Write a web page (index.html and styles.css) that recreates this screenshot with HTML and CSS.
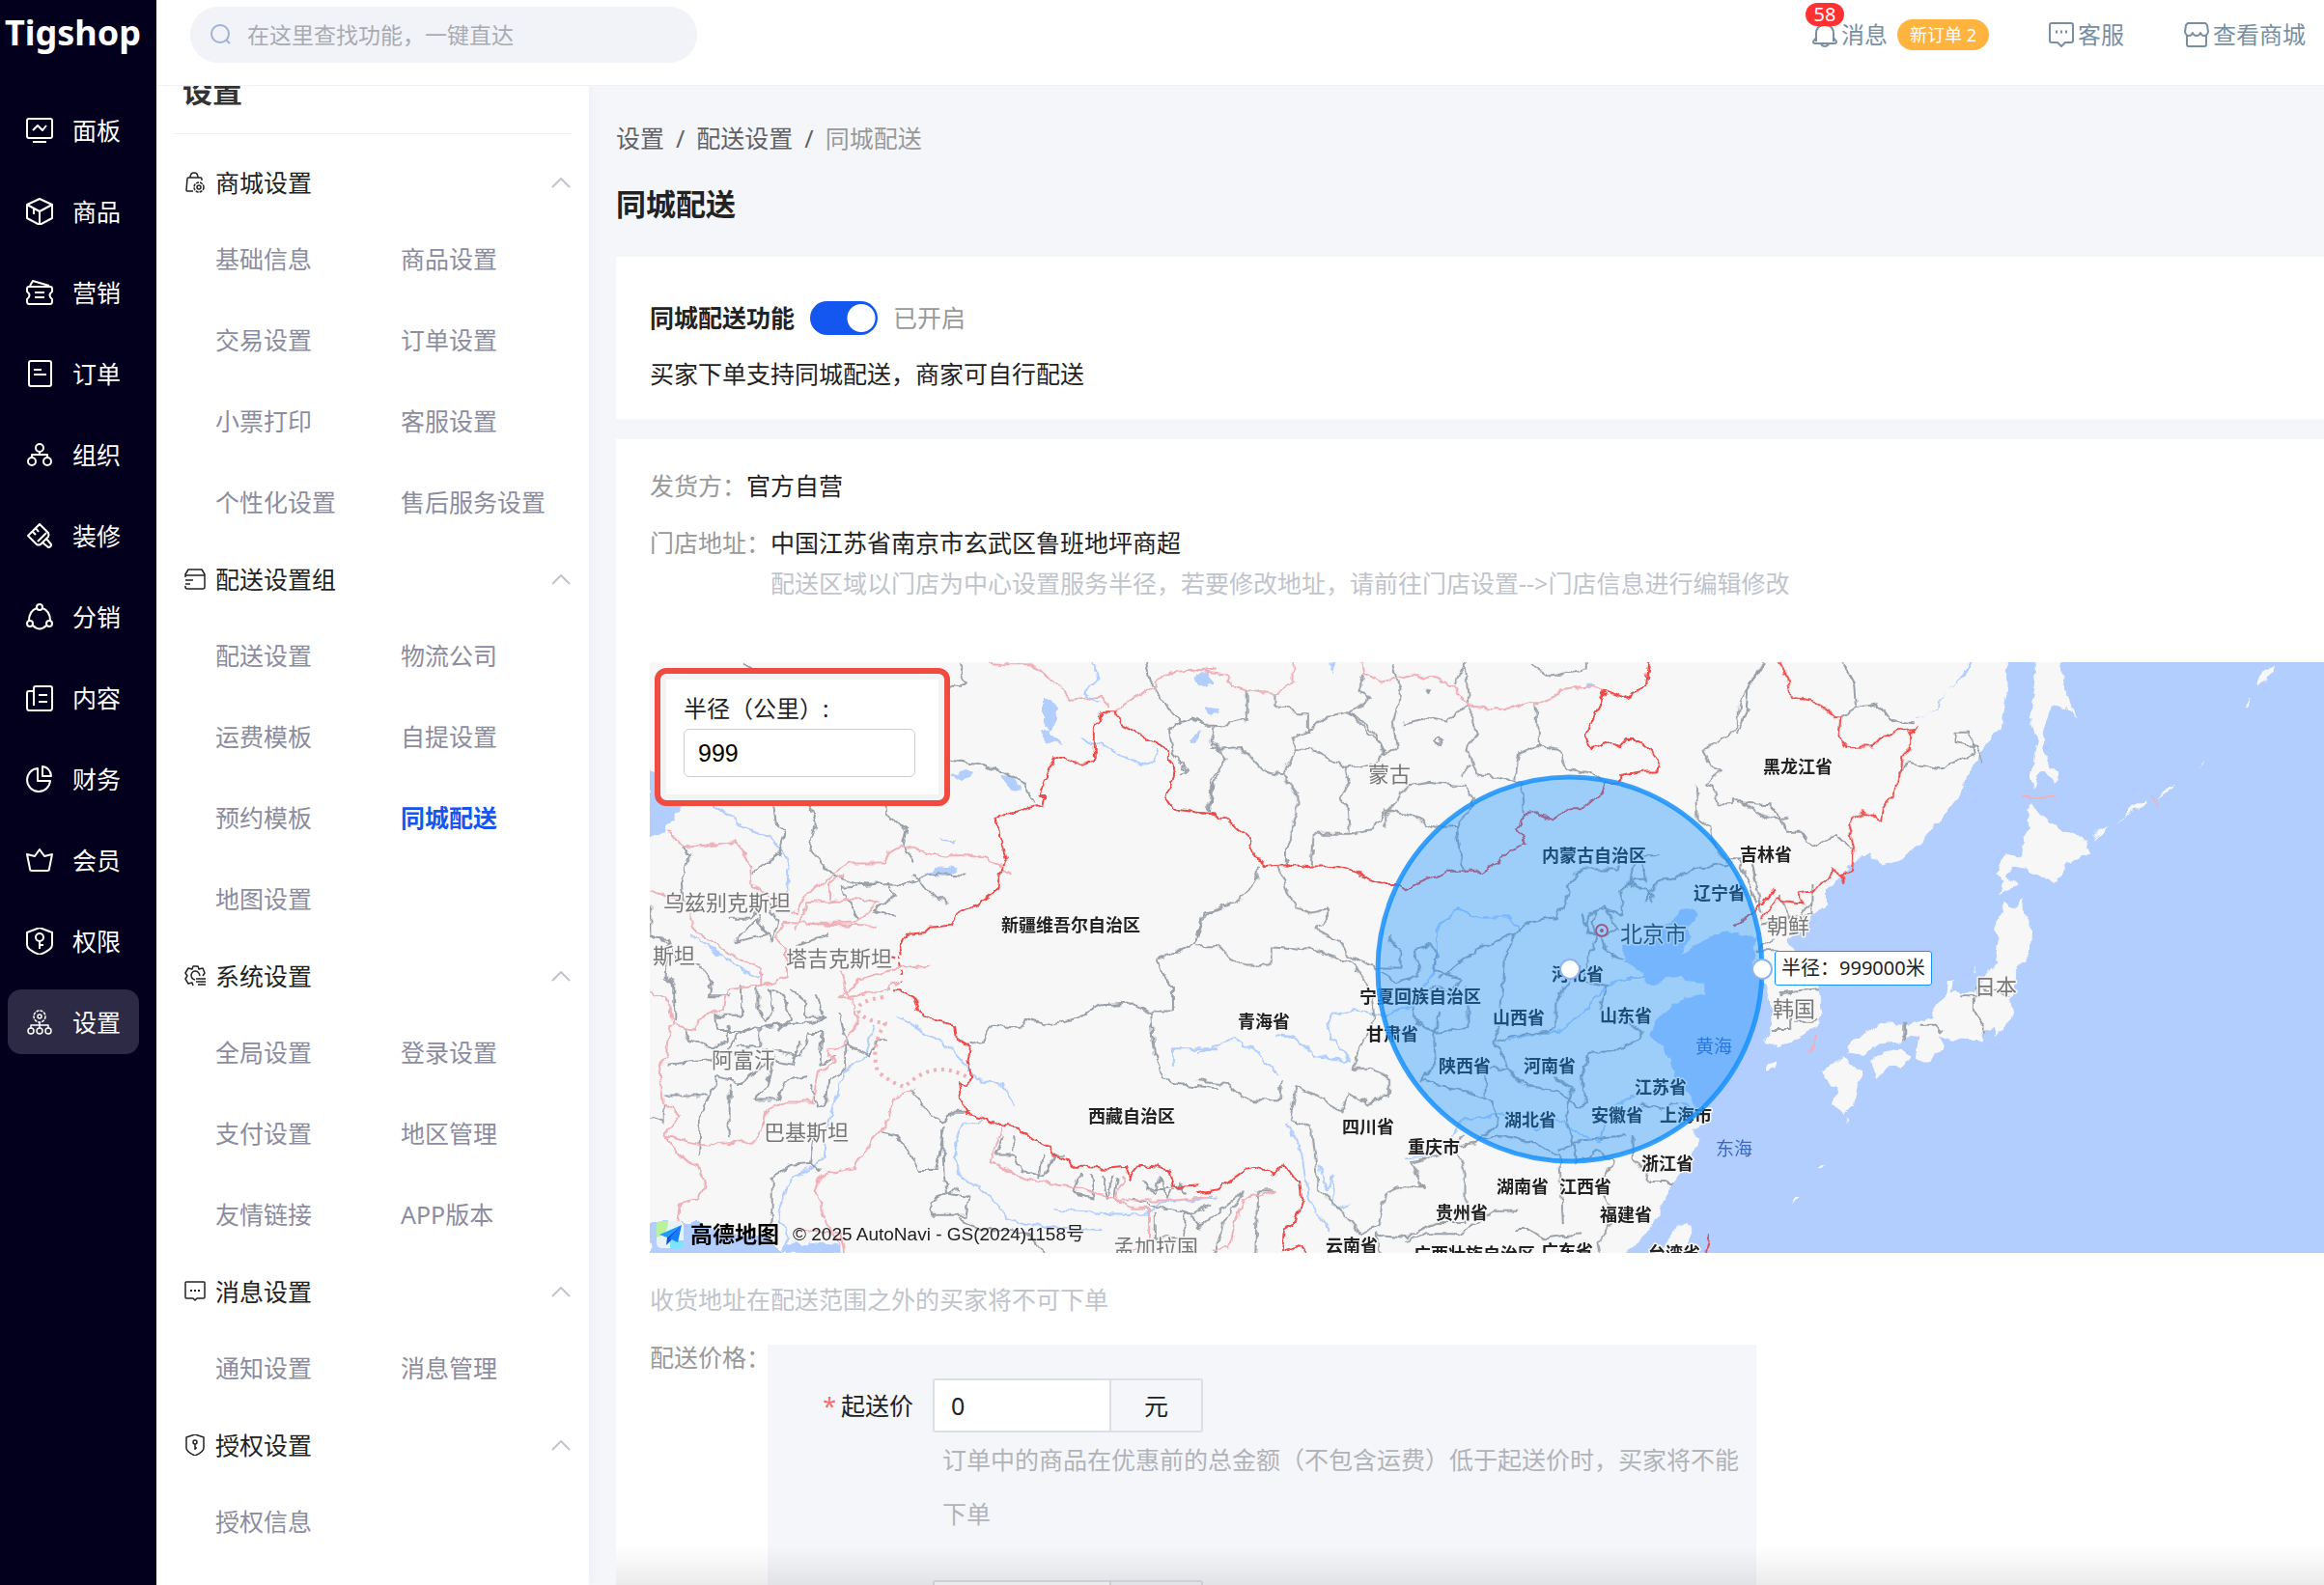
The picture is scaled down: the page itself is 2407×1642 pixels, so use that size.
FILE: index.html
```html
<!DOCTYPE html>
<html lang="zh-CN">
<head>
    <meta charset="UTF-8">
    <meta name="viewport" content="width=device-width, initial-scale=1.0">
    <title>同城配送 - Tigshop</title>
    <link rel="stylesheet" href="styles.css">
</head>
<body>
    <nav class="sidebar">
        <a href="#" class="logo">Tigshop</a>
        <a href="#" class="nav-item">
            <svg class="nav-icon" viewBox="0 0 28 28"><rect x="1" y="2" width="26" height="20" rx="2"/><path d="M7 14l5-5 5 5 4-5M7 26h14"/></svg>
            <span>面板</span>
        </a>
        <a href="#" class="nav-item">
            <svg class="nav-icon" viewBox="0 0 28 28"><path d="M14 1l13 6v14l-13 7-13-7V7zM1 7l13 7 13-7M14 14v14M8 11v6"/></svg>
            <span>商品</span>
        </a>
        <a href="#" class="nav-item">
            <svg class="nav-icon" viewBox="0 0 28 28"><path d="M3 8h22q2 0 2 2v3q-5 4 0 8v2q0 3-2 3H3q-2 0-2-3v-2q5-4 0-8v-3q0-2 2-2zM4 7l3-5 17 5M9 14h10M9 19h10"/></svg>
            <span>营销</span>
        </a>
        <a href="#" class="nav-item">
            <svg class="nav-icon" viewBox="0 0 28 28"><rect x="3" y="1" width="23" height="26" rx="2"/><path d="M8 10h8M8 15h13"/></svg>
            <span>订单</span>
        </a>
        <a href="#" class="nav-item">
            <svg class="nav-icon" viewBox="0 0 28 28"><circle cx="14" cy="7" r="4"/><circle cx="6" cy="21" r="4"/><circle cx="22" cy="21" r="4"/><path d="M14 11v3M6 17v-3h16v3"/></svg>
            <span>组织</span>
        </a>
        <a href="#" class="nav-item">
            <svg class="nav-icon" viewBox="0 0 28 28"><path d="M14 2L2 14l9 9q2 1 4 0l8-8q1-2 0-4zM10 6l3 4M6 9l4 4M12 20l9-9M17 21l6 5q3 0 3-3l-5-6"/></svg>
            <span>装修</span>
        </a>
        <a href="#" class="nav-item">
            <svg class="nav-icon" viewBox="0 0 28 28"><circle cx="14" cy="4" r="3"/><circle cx="4" cy="21" r="3"/><circle cx="24" cy="21" r="3"/><path d="M11 5Q3 8 3 18M17 5q8 3 8 13M7 23q7 7 14 0"/></svg>
            <span>分销</span>
        </a>
        <a href="#" class="nav-item">
            <svg class="nav-icon" viewBox="0 0 28 28"><path d="M8 22V4q0-2 2-2h15q2 0 2 2v20q0 3-2 3H3q-2 0-2-3V9q0-2 2-2h5M13 11h9M13 18h9"/></svg>
            <span>内容</span>
        </a>
        <a href="#" class="nav-item">
            <svg class="nav-icon" viewBox="0 0 28 28"><path d="M12 3a12 12 0 1 0 13 13H12zM17 1v10h9q-1-9-9-10z"/></svg>
            <span>财务</span>
        </a>
        <a href="#" class="nav-item">
            <svg class="nav-icon" viewBox="0 0 28 28"><path d="M1 8l8 2 5-7 5 7 8-2-3 15q0 2-2 2H6q-2 0-2-2z"/></svg>
            <span>会员</span>
        </a>
        <a href="#" class="nav-item">
            <svg class="nav-icon" viewBox="0 0 28 28"><path d="M14 0l13 5v13q0 5-13 10Q1 23 1 18V5z"/><circle cx="14" cy="10" r="4"/><path d="M14 14v8M14 18h4"/></svg>
            <span>权限</span>
        </a>
        <a href="#" class="nav-item active">
            <svg class="nav-icon thin" viewBox="0 0 28 28"><circle cx="14" cy="8" r="6" stroke-dasharray="3 1"/><circle cx="14" cy="8" r="2"/><circle cx="5" cy="23" r="3"/><circle cx="14" cy="23" r="3"/><circle cx="23" cy="23" r="3"/><path d="M14 14v6M5 20v-3h18v3"/></svg>
            <span>设置</span>
        </a>
    </nav>

    <div class="page">
        <header class="topbar">
            <label class="search">
                <svg class="search-icon" viewBox="0 0 22 22"><circle cx="10" cy="10" r="9"/><path d="M16 16l4 4"/></svg>
                <input type="text" placeholder="在这里查找功能，一键直达" aria-label="搜索">
            </label>
            <div class="actions">
                <a href="#" class="action">
                    <svg class="action-icon" viewBox="0 0 26 26"><path d="M4 20v-8q0-9 9-9t9 9v8M4 16l-3 4q0 2 2 2h20q2 0 2-2l-3-4M9 23q4 4 8 0"/></svg>
                    <span>消息</span>
                    <span class="badge">58</span>
                    <span class="pill">新订单 2</span>
                </a>
                <a href="#" class="action">
                    <svg class="action-icon" viewBox="0 0 26 26"><path d="M3 1h20q2 0 2 2v16q0 2-2 2h-6l-4 4-4-4H3q-2 0-2-2V3q0-2 2-2z"/><path d="M7 10h2M12 10h2M17 10h2" stroke-width="3"/></svg>
                    <span>客服</span>
                </a>
                <a href="#" class="action">
                    <svg class="action-icon" viewBox="0 0 26 26"><path d="M4 1h18l2 2 1 7q-1 4-4 4-3 0-4-3-1 3-4 3t-4-3q-1 3-4 3-3 0-4-4l1-7zM3 14v9q0 2 2 2h16q2 0 2-2v-9"/></svg>
                    <span>查看商城</span>
                </a>
            </div>
        </header>

        <div class="body">
            <aside class="submenu">
                <h2 class="submenu-title">设置</h2>
                <section class="group">
                    <button type="button" class="group-head">
                        <svg class="group-icon" viewBox="0 0 22 22"><path d="M9 20H3q-1 0-1-1L3 7q0-1 1-1h13q1 0 1 3M6 6q0-5 4-5t4 5"/><circle cx="15" cy="16" r="5" stroke-dasharray="3 1"/><circle cx="15" cy="16" r="2"/></svg>
                        <span>商城设置</span>
                        <svg class="chevron" viewBox="0 0 22 12"><path d="M2 11l9-9 9 9"/></svg>
                    </button>
                    <div class="links">
                        <a href="#">基础信息</a><a href="#">商品设置</a>
                        <a href="#">交易设置</a><a href="#">订单设置</a>
                        <a href="#">小票打印</a><a href="#">客服设置</a>
                        <a href="#">个性化设置</a><a href="#">售后服务设置</a>
                    </div>
                </section>
                <section class="group">
                    <button type="button" class="group-head">
                        <svg class="group-icon" viewBox="0 0 22 22"><path d="M1 9V6l3-5h14l3 5v13q0 2-2 2H3q-2 0-2-2v-1M1 7h20M1 12h8M1 16h5"/></svg>
                        <span>配送设置组</span>
                        <svg class="chevron" viewBox="0 0 22 12"><path d="M2 11l9-9 9 9"/></svg>
                    </button>
                    <div class="links">
                        <a href="#">配送设置</a><a href="#">物流公司</a>
                        <a href="#">运费模板</a><a href="#">自提设置</a>
                        <a href="#">预约模板</a><a href="#" class="current">同城配送</a>
                        <a href="#">地图设置</a>
                    </div>
                </section>
                <section class="group">
                    <button type="button" class="group-head">
                        <svg class="group-icon" viewBox="0 0 22 22"><path d="M9 21l-1-3-4 1-3-5 2-3-2-3 3-5 4 1 1-3h5l1 3 4-1 2 5-2 3M11 15q-4-1-4-5 1-4 4-4 4 0 5 5M12 14h10M12 17h10M14 20h8"/></svg>
                        <span>系统设置</span>
                        <svg class="chevron" viewBox="0 0 22 12"><path d="M2 11l9-9 9 9"/></svg>
                    </button>
                    <div class="links">
                        <a href="#">全局设置</a><a href="#">登录设置</a>
                        <a href="#">支付设置</a><a href="#">地区管理</a>
                        <a href="#">友情链接</a><a href="#">APP版本</a>
                    </div>
                </section>
                <section class="group">
                    <button type="button" class="group-head">
                        <svg class="group-icon" viewBox="0 0 22 22"><path d="M2 1h18q1 0 1 1v15q0 1-1 1h-7l-2 2-2-2H2q-1 0-1-1V2q0-1 1-1z"/><path d="M6 10h2M10 10h2M14 10h2" stroke-width="2"/></svg>
                        <span>消息设置</span>
                        <svg class="chevron" viewBox="0 0 22 12"><path d="M2 11l9-9 9 9"/></svg>
                    </button>
                    <div class="links">
                        <a href="#">通知设置</a><a href="#">消息管理</a>
                    </div>
                </section>
                <section class="group">
                    <button type="button" class="group-head">
                        <svg class="group-icon" viewBox="0 0 22 22"><path d="M11 0l9 3v11q0 4-9 8-9-4-9-8V3z"/><circle cx="11" cy="8" r="2"/><path d="M11 10v6M11 14h2"/></svg>
                        <span>授权设置</span>
                        <svg class="chevron" viewBox="0 0 22 12"><path d="M2 11l9-9 9 9"/></svg>
                    </button>
                    <div class="links">
                        <a href="#">授权信息</a>
                    </div>
                </section>
            </aside>

            <main class="content">
                <div class="breadcrumb">
                    <a href="#">设置</a><span>/</span><a href="#">配送设置</a><span>/</span><span class="last">同城配送</span>
                </div>
                <h1>同城配送</h1>

                <section class="card feature">
                    <div class="switch-row">
                        <label for="enabled">同城配送功能</label>
                        <input type="checkbox" id="enabled" class="switch" checked>
                        <span class="muted">已开启</span>
                    </div>
                    <p>买家下单支持同城配送，商家可自行配送</p>
                </section>

                <section class="card detail">
                    <div class="row"><span class="muted">发货方：</span><span>官方自营</span></div>
                    <div class="row">
                        <span class="muted">门店地址：</span>
                        <div>
                            <p>中国江苏省南京市玄武区鲁班地坪商超</p>
                            <p class="hint">配送区域以门店为中心设置服务半径，若要修改地址，请前往门店设置--&gt;门店信息进行编辑修改</p>
                        </div>
                    </div>

                    <div class="map">
                        <svg class="map-canvas">
                            <defs>
                                <filter id="rough" x="0" y="0" width="100%" height="100%">
                                    <feTurbulence type="fractalNoise" baseFrequency="0.09" numOctaves="2" seed="4"/>
                                    <feDisplacementMap in="SourceGraphic" scale="9" xChannelSelector="R" yChannelSelector="G"/>
                                </filter>
                            </defs>
                            <g filter="url(#rough)">
                                <!-- land -->
                                <g class="land">
                                    <rect x="-20" y="-20" width="600" height="660"/>
                                    <path transform="translate(567 -16) scale(.3827 .4082)" d="M-20 0H1520V738L1480 725 1440 725 1390 733 1340 765 1310 782 1325 755 1340 735 1325 715 1355 685 1340 665 1300 670 1280 700 1240 725 1215 745 1150 760 1155 800 1210 830 1215 855 1240 860 1270 840 1310 835 1320 850 1375 855 1375 880 1320 890 1290 910 1255 935 1225 975 1225 990 1260 1015 1280 1050 1300 1100 1330 1140 1350 1165 1300 1160 1370 1210 1335 1225 1360 1245 1340 1290 1310 1330 1280 1370 1250 1440 1210 1500 1130 1560H-20z"/>
                                    <path transform="translate(1127 -16) scale(.3871 .4082)" d="M-60 0H725L720 40 722 100 705 205 670 240 630 300 600 370 540 440 490 500 430 545 385 555 350 525 330 530 275 580 235 620 235 655 205 680 160 720 130 745 150 770 180 800 215 860 225 930 215 960 160 995 110 1020 70 1000 90 960 85 900 75 860 40 800 50 780 35 760 60 740 0 725-60 700z"/>
                                    <path transform="translate(1127 -16) scale(.3871 .4082)" d="M790 0L858 20 868 80 890 150 910 185 880 155 845 148 825 185 812 260 835 300 858 320 852 350 825 315 805 325 790 362 782 330 800 240 782 180 795 100zM785 395L830 445 890 475 925 480 945 525 880 545 845 600 770 565 735 560 715 580 748 605 700 628 712 595 690 570 715 530 760 530 765 490 780 460 770 410zM712 650L735 665 760 635 762 670 788 720 785 770 765 800 745 815 742 870 730 900 735 940 690 985 690 965 655 975 650 1000 570 998 540 985 555 1010 505 1058 475 1045 485 985 440 1000 380 1005 330 1035 290 1030 300 1010 380 955 440 960 520 940 520 915 555 890 560 850 575 850 570 880 640 870 690 800 700 740 690 720zM440 1020L458 1040 435 1068 410 1060 375 1095 355 1050 395 1030zM285 1040L335 1080 320 1120 310 1160 285 1183 255 1165 265 1120 245 1115 225 1075zM75 1065l30-8-5 15-25 2zM1125 385l30-30 15-5-25 25zM1010 455l40-45 50-20-5 12-45 15zM945 495l25-35 20-3-25 20zM1388 90l20-35 30-10-20 40-30 15zM1360 150l8-20 2 5-4 18zM1230 312l18-20 2 2zM290 1215l4-20 3 5zM145 1420l8-22 14-8zM212 1325l18-15-5 12zM625 825l8-14-2 18z"/>
                                    <path d="M1050 612q8-28 24-30 10 2 4 14l-12 20z"/>
                                </g>
                                <!-- lakes, gulf -->
                                <g class="water">
                                    <path transform="translate(-13 -16) scale(.3827 .4082)" d="M34 315l50 20 70 30-50 60-30 45-40 20zM775 575l50-20 40 5-30 25zM815 490l50 0-10 6zM845 325l40-14 25 10-30 20zM980 325l40 5 20 40-25-5zM1505 75l40-10 15 25-40 10zM1090 220l20-5 45 35-50-10zM1100 190v-60h20l20 30-25 60zM1495 230l30-15-5 20-25 10zM34 1460h130l70 30 110 0 60 60H34zM400 1520l60-10 90 10v20H400z"/>
                                    <path transform="translate(567 -16) scale(.3827 .4082)" d="M0 70l40 10-20 20H0zM20 155l40 5-20 20zM355 40h20l-10 30zM1050 95l30 0-20 15z"/>
                                    <path d="M1313 60l20-12 10-18 18-15 10-15h-4l-12 18-12 12-8 18-24 12z"/>
                                </g>
                                <g class="river">
                                    <path transform="translate(-13 -16) scale(.3827 .4082)" d="M130 365l100 50 70 50 60 20 50 60-5 80M1230 40l20 40-40 40 40 20M1200 235l60 15 100 50 40-10 10-30M700 940l50 20 100 60 70 80 70 10 30 60M640 960l-20 80-60 40-40 120-20 100-90 60-30 80 30 60-30 60M940 1200l-70 20-10 40 10 80 80 50 50 60 60 20 200 10M1130 1430l250 10 40-30 150-10M1450 1060v-40h120M140 730l160 100 40 10"/>
                                    <path transform="translate(567 -16) scale(.3827 .4082)" d="M0 1030l100-35 60 30 60 60M210 985l50 5 60 50 90 10-60-80 20-40 60-8 80 15 70-30 60-80 10-50 0-60 50-50 70 20 80 0 30 40M840 1000l80-20 60 0 60-50 70-70 50-20 60 0M560 1300l100-10 60-90 100-15 100 40 50-30 60 40 60 20 20-80 70-35M240 1210l40 60 20 130 60 80M330 1310l20 70 20-40-5 80 50 0"/>
                                </g>
                                <!-- province and foreign region lines -->
                                <g class="line">
                                    <path transform="translate(-13 -16) scale(.3827 .4082)" d="M285 40l60 35 20 0M870 40l20 50-20 15-45 0-5 60 15 40-20 80 100 10 120 40 40 60M365 375l10 70 25 20-15 60-75 50M455 375l25 70-15 70 65 65 60 20 130 5 70-30 100 5M120 510l25 15-25 80 5 40M670 375l5 50 55 40-10 40 30 40M35 655v80l50 5 20 50 70 20 30 40-10 35 60 0M35 730l50 20-5 90 20 25v85M245 690l60 0 20-20 20 60-80 20 60-60 40 60 15-55-20-40M600 690l-50-80 130-10 20 30-60 40 60 15M750 580l30 40 65 30M430 760l90-30M280 860l0 75-70 0 5 40 80 0M325 860l0 60 25 30 20-20-10-60 35 10 20 60-35 30M415 870l40 30 0 40 50 0-20-60M125 965l20 35 60 20 40-20 0-40M330 965l-60 20-30 45-50 20-110 10M330 965l0 50-60 0M330 965l90-10 50 0 40-15M340 1020l100 20 20-60 40 0-5 80 40-20M440 1000l-20 60-60-10-80 60-60-20-50 100-5 100M370 1040l-20 70-30 40 60 0 20-50 60-10M75 1138l115 0M250 1250v-140M35 1195l40 10 0-40M470 1110l20 60 20-10 5-60 50-30 0-60M545 930l25 80 60 30 20-40 30 0M740 1120l50 60 40 30 20-30 50 0M830 1220l-20 110-50 0-20-40-40-50-40-10M825 1225l5 120 10 40 60 10-10 50-90 0-10-40 80-30M470 1310l10-70M495 1330l-20-20-60 5-50 30 0 80-10 50M990 1240l-20 50 50 0 20 40 60 10 30-50 30 0M1020 1240l0 40M1100 1290l-10 60M1200 1340l-20 50 60 10-10-60M1260 1340l10 60 20-60M1290 1400l10-50M1365 1350l30 40 20-40 20 50 30-40 20 30M1380 1380l100-10M1340 1400l60 20 100 20 20 40M1400 1440v60l80 0 0-60 70-20M870 1450l60 30 70 0 60 10 40 50M1380 40l10 50 20 30 60 70-30 20 10 60 40 50-20 5M1465 190l40-10 30 20 33 0M1550 420l5-60 20-40M900 1010l40-10 20-40 80 5 20-20 60 15 80-20 50-30 90-5 50 25 10 100 20 60 40 20 110 10M1390 925l60 0 0-60-30-40-10-30 100-40 20-80 33-5"/>
                                    <path transform="translate(567 -16) scale(.3827 .4082)" d="M135 110v75l-90 20-10 40 20 10 25 30-40 50-10 85M210 120l0 30 70 20 20 0 0 45-40 15 10 30 50 5 80 40 80-10 30-30-60-60-40-40-50 10-70 40M40 260l80-5 60 60 50 10 40-65M230 325l40 50 0 50-30 80 0 50M400 305l10 40-20 40 20 30 5 60 60-10 35-50 70 15 60 30 60-5 30-30 20-40-20-30-100-10-70 10-20 40-30 30 0 30M415 475l-100 0-5 85M450 75l-10 40 30 15-55 35 60 50 35 60 30-20-10-60 20-90-20-60M555 195l70-15 50 10 60-40-10-110-30 60M740 150l0 40 20 30-30 40 30 70 60 0 60 20 5 70M740 300l-30 30M860 340l10-70 50-20 60 10 20 50 60 10 40 20M915 140l10 110M700 455l18 120M905 45l50 30 100-20 0-20M620 107l5 8 6-6zM645 240l12-8 10 6-10 10zM1530 40l-60 100-10 70-50 30-40 20 20 40 30 15-40 30 20 5 10 50 40 0 0-20 100 60 50-10M1350 350l5 90 30 20 20 60 30 20 60 0 30 110M1500 540l30 140M220 555l20 60 30 50 40 10 40-10 0 30-30 20 60 30 30 40 80 30 60 0 0-50-30-20 0-10M170 560l-10 40-60 50-80 30-20 50M0 760l60 0 30 30 40 20 70 0 0-50 120 10 100 30 50 80 10 60-40 80-20 50 50 0 50 30 0 40-60 20-50-30-20 50-60-40-60-20-20 80 60 20 20 160 60 50 50 60 50-20 20-80 50-20 50 0-30-60 80-20 60-50M0 1100l80 10 50 40 90 0 10-50M500 830l40 20 60-20-10-60 40-20 20 30-10 40 70 20-20 40-50-20-60 30 10 60 50 30 20-50M650 840l40-20 80-60 60-20 30-10 40-30 50-10 25-5 30-60-10-20 50-40 90 0 20-40 30 20-10 60 40 10 20 30M860 730l-30 60-10 160-15 50 35 70 40 40 100 20 50 40 20-10-10-70 20-60 60 0 80-30 0-30-60-20-50-30 20-60-60-10 0-30 30-80-10-40 20-40 60 20-5-60 40-30 30 0-20-60 60 0M1040 680l20 50 30 0 20 50 40 10M1100 655l-40 30-10 40 50 10 40-20zM810 1000l90-20 70-10 0-70 60-90M1215 640l30-40 60-20 60-20 80-10M730 860l0 110-90 10 5 80-40 40 130 30 60 20 20 60-60 50-60 10 30 60 0 130-80 0-80 40-80-10 10 60 30 20 0 60 100 20 80-60 70-40 80 0 10 40 70 10 40 40 60-30 20 40 50-20 40-80-50 20-10-60 40-50-20-60-20-30 40-60-40-30-60 30-10-60-20-60 20-70-50-30M770 1250l60-10 80 20 70 30 10 180M980 1280l60-30 120-10M1180 1240l0 60 50 60 60 0M780 1140l0-70 60 0M560 1510l60-20 90 0 100-60 60 0M860 1480l40 0 40 20 100-10M1200 1160l40 10 60-10M160 1540l5-160 50 0M0 1480l60-50 70-50-60 80-20 80"/>
                                    <path transform="translate(1127 -16) scale(.3871 .4082)" d="M70 40l-40 60-5 60-25 60M280 40l30 50 5 60M275 180l40-25 60-10 30 40 65 10M430 320l30-30 80 20 60-25 30-10-10-60-40 0 0 30 60 10 15 40M0 395l80 5 40 40 10 30 40 0 30 40 60-30 45 35M0 540l30 60 20 50M200 600l0 80-60 10-30-60M60 700l100-20 40-30M100 740l-50 30 60 0M110 880l105-10M140 900l0 70-50 0M150 950l65 0M590 885l50 0 0-20 90 20M630 890l0 30 25 40 0 20M445 950l0 50M490 960l40 0 20 20"/>
                                </g>
                                <g class="abroad">
                                    <path transform="translate(-13 -16) scale(.3827 .4082)" d="M85 465l40 45 140-15 40 50 5 60 20 10 60 40 40 20 20-40 60-40 60-45 100 0 10-30 40-15 80 25 120 0 60 20 30 30M35 620l110 30 0 60 90 60 100 50 0 40 70-20 0-70-30-30 20-40 250 10M430 720l30-70 130-10 60 10-60 50-130 0M520 640l0-40 40-20M335 860l-90 10-10 50-60 20-20 30-60-10-10-60-50-25M90 960l-10 80-20 20 10 100 45 30-40 50 90 25 160-10 20-70 60-30 70 0 20-80 40-20-20-30 40-10 40-60-10-60-40 0 60-50 60-20 60-10 70-5M75 1240l50 60 40 20 20 50-20 30-50 20-10 60M550 820l20 70 100-20 40-20M750 1120l-60 30-10 50-50 60-40 60-90 20-20 40 30 80 40 60M940 40l50 5 80 0 80 60 20 30 80-10 30 30M1300 160l90-55 50-40 130-10M985 1225l-30 80 100 50 150 20 100 30 150 0 100-10M1315 1345l-20 60 40 20 50 0 0 90-60 25M430 1480l120 10 10 50"/>
                                    <path transform="translate(567 -16) scale(.3827 .4082)" d="M0 60l80 10 10 30 40 10 80 10 50-30 0-50M445 40l5 30 50 20 80-20 70 10 50 30 35 40 100 10 60-20 50 0 40-30 80-10 40 10M215 1380l-90 20-20 60-20 70M40 1530l50-5"/>
                                    <path transform="translate(1127 -16) scale(.3871 .4082)" d="M760 382h90M1107 378l16 26M212 988l-18 38"/>
                                </g>
                                <g class="border">
                                    <path transform="translate(-13 -16) scale(.3827 .4082)" d="M1568 425l-60-5-60-10-15-20 10-40 10-40-30-60-60-25-60-30-5-30-40 0-20 40 0 80-30 10-20 0-60-15-40 100 15 0-5 30-20-5-70 20-40 5 10 50 20 60-15 40-5 35-60 40-35 15-20 10-15 30-60 5-10 10-50 5-15 35 5 20M690 870l20 0 40 20 20 45 60 20 30 5 5 40 35 20-5 30 10 45-15 20-20-10 5 40 20 40 40 10 55 25 10-5 30 5 40 30 45 20 10 20 40 10 15 20 30 0 60 5 50-5 10 30 30-35 50 5 30 10 10 40 70-5"/>
                                    <path transform="translate(567 -16) scale(.3827 .4082)" d="M0 1387l60-10 70-50 30-5 45 20 30-30 30 40 15 0 5 50-20 60-30 20-5 50 50-15 15 20M0 422l35 2 40 10 40 32 20 10 20 50 25 30 60-4 70 8 70 0 50 15 50 20 40 10 30 0 20 15 30-20 80-30 90 0 50-25 20-25 50-20-25-40 30-40 20 0 50 20 40-30 40 0 50-40 10-25 40 0 0-20 70-10 30 0 5-20-20-30-40-30-30 0-20 20-30-15-40 15-20-30 40-80 15-35 50 20 60-30 10-70 5-10M1455 710l60-45 45-50M1385 1495l-12 50"/>
                                    <path transform="translate(1127 -16) scale(.3871 .4082)" d="M110 40l25 40 10 50 50 5 35 20 30 25 15 0-5 50 20 25 70-2 20-20 50-20 50-5-20 10 0 40-20 20-10 60-20 50-20 20-5 30-50-20-40 30 15 60-5 60-30 10 10 20-30-40-10 30-25 10-15 20-40 5 10 30-50-5-20-10-25 40-25 15"/>
                                </g>
                                <g class="border dashed"><path transform="translate(-13 -16) scale(.3827 .4082)" d="M665 780l45 10 5 60"/></g>
                            </g>
                            <g class="abroad dotted"><path d="M242 347q-28 4-26 14 4 10 28 13-16 24-8 50 14 12 28 16 30-30 65-10"/></g>

                            <g class="label">
                                <text x="364" y="279">新疆维吾尔自治区</text>
                                <text x="454" y="477">西藏自治区</text>
                                <text x="924" y="207">内蒙古自治区</text>
                                <text x="1081" y="246">辽宁省</text>
                                <text x="934" y="330">河北省</text>
                                <text x="735" y="353">宁夏回族自治区</text>
                                <text x="873" y="375">山西省</text>
                                <text x="984" y="373">山东省</text>
                                <text x="742" y="392">甘肃省</text>
                                <text x="609" y="379">青海省</text>
                                <text x="817" y="425">陕西省</text>
                                <text x="905" y="425">河南省</text>
                                <text x="1020" y="447">江苏省</text>
                                <text x="975" y="476">安徽省</text>
                                <text x="1046" y="476">上海市</text>
                                <text x="885" y="481">湖北省</text>
                                <text x="717" y="488">四川省</text>
                                <text x="785" y="509">重庆市</text>
                                <text x="1027" y="526">浙江省</text>
                                <text x="877" y="550">湖南省</text>
                                <text x="942" y="550">江西省</text>
                                <text x="814" y="577">贵州省</text>
                                <text x="984" y="579">福建省</text>
                                <text x="700" y="611">云南省</text>
                                <text x="791" y="620">广西壮族自治区</text>
                                <text x="923" y="617">广东省</text>
                                <text x="1034" y="619">台湾省</text>
                                <text x="1153" y="115">黑龙江省</text>
                                <text x="1129" y="206">吉林省</text>
                            </g>
                            <g class="label country">
                                <text x="14" y="257">乌兹别克斯坦</text>
                                <text x="3" y="312">斯坦</text>
                                <text x="141" y="315">塔吉克斯坦</text>
                                <text x="64" y="420">阿富汗</text>
                                <text x="118" y="495">巴基斯坦</text>
                                <text x="480" y="614">孟加拉国</text>
                                <text x="744" y="124">蒙古</text>
                                <text x="1157" y="281">朝鲜</text>
                                <text x="1163" y="367">韩国</text>
                                <text x="1372" y="344">日本</text>
                            </g>
                            <g class="label capital"><text x="1005" y="290">北京市</text></g>
                            <g class="label sea">
                                <text x="1083" y="405">黄海</text>
                                <text x="1104" y="511">东海</text>
                            </g>
                            <g class="capital-mark"><circle cx="986" cy="278" r="6"/><circle cx="986" cy="278" r="1"/></g>

                            <circle class="radius" cx="953" cy="318" r="199"/>
                            <circle class="handle" cx="953" cy="318" r="10"/>
                            <circle class="handle" cx="1152" cy="318" r="10"/>
                        </svg>
                        <div class="radius-tip">半径：999000米</div>
                        <div class="radius-box">
                            <label for="radius">半径（公里）:</label>
                            <input type="text" id="radius" value="999">
                        </div>
                        <div class="map-credit">
                            <svg class="amap-icon" viewBox="0 0 28 28"><rect width="28" height="28" rx="5" fill="#e9f3f5"/><path d="M0 5q0-5 5-5h7q0 14-12 17z" fill="#b9f29b"/><path d="M14 28V20h14v3q0 5-5 5z" fill="#7be3fb"/><path d="M26 4L3 14l8 3z" fill="#1f9bff"/><path d="M26 4L11 17l-1 8 5-5z" fill="#0b4fd8"/><path d="M26 4L13 18l9 4z" fill="#127dff"/></svg>
                            <strong>高德地图</strong>
                            <span>© 2025 AutoNavi - GS(2024)1158号</span>
                        </div>
                    </div>

                    <p class="hint">收货地址在配送范围之外的买家将不可下单</p>

                    <div class="price">
                        <span class="price-title">配送价格：</span>
                        <div class="price-box">
                            <div class="field">
                                <label for="base-price"><span class="required">*</span>起送价</label>
                                <div class="input-group">
                                    <input type="text" id="base-price" value="0"><span class="unit">元</span>
                                </div>
                            </div>
                            <p class="help">订单中的商品在优惠前的总金额（不包含运费）低于起送价时，买家将不能下单</p>
                            <div class="field">
                                <label for="fee"></label>
                                <div class="input-group">
                                    <input type="text" id="fee" aria-label="配送费"><span class="unit"></span>
                                </div>
                            </div>
                        </div>
                    </div>
                </section>
                <div class="bottom-shade"></div>
            </main>
        </div>
    </div>
</body>
</html>
```
FILE: styles.css
```css
* {
    box-sizing: border-box;
}

body {
    margin: 0;
    display: flex;
    height: 100vh;
    overflow: hidden;
    font-family: "Noto Sans", "Noto Sans CJK SC", sans-serif;
    font-size: 25px;
    line-height: 38px;
    color: #222;
    background: #f5f6fa;
}

a {
    color: inherit;
    text-decoration: none;
}

p, h1, h2 {
    margin: 0;
}

input, button {
    font: inherit;
    color: inherit;
}

svg {
    flex: none;
    fill: none;
    stroke: currentColor;
    stroke-linejoin: round;
}

/* sidebar */
.sidebar {
    position: relative;
    z-index: 1;
    flex: none;
    display: flex;
    flex-direction: column;
    gap: 17px;
    width: 162px;
    padding: 0 18px 0 8px;
    color: #fff;
    background: #03001e;
}

.logo {
    height: 84px;
    margin-left: -3px;
    font-family: "Noto Sans", sans-serif;
    font-size: 36px;
    font-weight: 700;
    line-height: 68px;
}

.nav-item {
    display: flex;
    align-items: center;
    gap: 20px;
    height: 67px;
    padding-left: 19px;
    border-radius: 14px;
}

.nav-item.active {
    background: #2d2a46;
}

.nav-icon {
    width: 28px;
    height: 28px;
    stroke-width: 2;
}

.nav-icon.thin {
    stroke-width: 1.5;
}

/* top bar */
.page {
    flex: 1;
    min-width: 0;
    display: flex;
    flex-direction: column;
}

.topbar {
    position: relative;
    z-index: 1;
    flex: none;
    display: flex;
    justify-content: space-between;
    height: 89px;
    padding: 7px 19px 0 35px;
    background: #fff;
    border-bottom: 1px solid #eff0f4;
}

.search {
    display: flex;
    align-items: center;
    gap: 16px;
    width: 525px;
    height: 58px;
    padding: 0 21px;
    border-radius: 29px;
    background: #f2f3f8;
}

.search-icon {
    width: 22px;
    height: 22px;
    color: #9fb2d6;
    stroke-width: 2;
}

.search input {
    flex: 1;
    min-width: 0;
    padding: 0;
    border: 0;
    outline: 0;
    background: none;
    font-size: 23px;
}

.search input::placeholder {
    color: #a8abb2;
}

.actions {
    display: flex;
    gap: 62px;
    height: 58px;
}

.action {
    position: relative;
    display: flex;
    align-items: center;
    gap: 4px;
    font-size: 24px;
    color: #788fa1;
}

.action-icon {
    width: 26px;
    height: 26px;
    stroke-width: 2;
}

.badge {
    position: absolute;
    top: -4px;
    left: -7px;
    width: 40px;
    border-radius: 12px;
    background: #ff3131;
    color: #fff;
    font-size: 20px;
    line-height: 24px;
    text-align: center;
}

.pill {
    margin-left: 6px;
    padding: 0 13px;
    border-radius: 16px;
    background: #ffb440;
    color: #fff;
    font-size: 18px;
    line-height: 32px;
}

/* settings menu */
.body {
    flex: 1;
    min-height: 0;
    display: flex;
}

.submenu {
    flex: none;
    width: 448px;
    padding: 0 18px 0 17px;
    overflow: hidden;
    background: #fff;
    box-shadow: 0 0 10px #e9eaf2;
}

.submenu-title {
    height: 77px;
    margin: -27px 0 12px;
    padding-left: 10px;
    border-bottom: 1px solid #eff0f4;
    font-size: 31px;
    line-height: 64px;
    color: #333;
}

.group-head {
    display: flex;
    align-items: center;
    gap: 10px;
    width: 100%;
    height: 75px;
    padding: 0 0 0 12px;
    border: 0;
    background: none;
    cursor: pointer;
}

.group-icon {
    width: 22px;
    height: 22px;
    stroke-width: 1.5;
}

.chevron {
    width: 22px;
    height: 12px;
    margin-left: auto;
    color: #c0c4cc;
    stroke-width: 2;
}

.links {
    display: grid;
    grid-template-columns: 192px 1fr;
    padding-left: 44px;
    line-height: 84px;
    color: #8c8c9f;
}

.links a {
    white-space: nowrap;
}

.links .current {
    font-weight: 700;
    color: #1456f0;
}

/* content */
.content {
    position: relative;
    flex: 1;
    min-width: 0;
    padding: 35px 0 0 28px;
    overflow: hidden;
}

.breadcrumb {
    display: flex;
    gap: 12px;
    color: #606266;
}

.breadcrumb .last {
    color: #999;
}

h1 {
    margin: 24px 0 30px;
    font-size: 31px;
    line-height: 50px;
}

.card {
    padding: 0 0 0 35px;
    background: #fff;
}

.feature {
    display: flex;
    flex-direction: column;
    gap: 20px;
    margin-bottom: 21px;
    padding-top: 44px;
    padding-bottom: 28px;
}

.switch-row {
    display: flex;
    align-items: center;
    gap: 16px;
}

.switch-row label {
    font-weight: 700;
}

.muted {
    color: #999;
}

.switch {
    appearance: none;
    width: 70px;
    height: 35px;
    margin: 0;
    border-radius: 18px;
    background: radial-gradient(circle at 53px 50%, #fff 14px, #1456f0 15px);
}

.detail {
    padding-top: 29px;
}

.row {
    display: flex;
    margin-bottom: 21px;
}

.hint {
    margin-top: 4px;
    color: #c0c4cc;
}

.map {
    position: relative;
    height: 612px;
    margin: 63px 0 29px;
    overflow: hidden;
    background: #b2cefe;
}

.map-canvas {
    display: block;
    width: 100%;
    height: 612px;
}

.map-canvas path {
    vector-effect: non-scaling-stroke;
}

.land {
    fill: #f7f7f7;
    stroke: none;
}

.water {
    fill: #b2cefe;
    stroke: none;
}

.river {
    stroke: #b2cefe;
    stroke-width: 2;
}

.line {
    stroke: #9aa0a8;
    stroke-width: 2;
}

.abroad {
    stroke: #f0b0b8;
    stroke-width: 2;
}

.border {
    stroke: #ec4848;
    stroke-width: 2;
}

.dashed {
    stroke-dasharray: 4 4;
}

.dotted {
    stroke-width: 4;
    stroke-dasharray: 3 5;
}

.label {
    fill: #222;
    stroke: #f7f7f7;
    stroke-width: 3;
    paint-order: stroke;
    font-size: 18px;
    font-weight: 700;
}

.country {
    fill: #777;
    font-size: 22px;
    font-weight: 400;
}

.capital {
    fill: #333;
    font-size: 23px;
    font-weight: 400;
}

.sea {
    fill: #3a68c4;
    stroke: #b2cefe;
    font-size: 19px;
    font-weight: 400;
}

.capital-mark {
    stroke: #e83a3a;
    stroke-width: 2;
}

.radius {
    fill: #1791fc;
    fill-opacity: 0.4;
    stroke: #1791fc;
    stroke-opacity: 0.85;
    stroke-width: 5;
}

.handle {
    fill: #fff;
    stroke: #8fb4ee;
    stroke-width: 2;
}

.radius-tip {
    position: absolute;
    top: 299px;
    left: 1165px;
    padding: 0 6px;
    border: 1px solid #1791fc;
    border-radius: 3px;
    background: #fff;
    font-size: 20px;
    line-height: 34px;
}

.radius-box {
    position: absolute;
    top: 12px;
    left: 11px;
    width: 294px;
    padding: 8px 15px 18px 18px;
    border: 6px solid #f3f3f4;
    border-radius: 6px;
    outline: 6px solid #f04b41;
    background: #fff;
    font-size: 24px;
}

.radius-box label {
    display: block;
    line-height: 43px;
}

.radius-box input {
    display: block;
    width: 240px;
    height: 50px;
    padding: 0 14px;
    border: 1px solid #ccc;
    border-radius: 6px;
    font-family: "Liberation Sans", sans-serif;
    font-size: 25px;
    color: #000;
}

.map-credit {
    position: absolute;
    left: 7px;
    bottom: 0;
    display: flex;
    align-items: center;
    gap: 7px;
    font-family: "Liberation Sans", "Noto Sans CJK SC", sans-serif;
    font-size: 19px;
}

.map-credit strong {
    margin-right: 7px;
    font-size: 23px;
    color: #000;
}

.amap-icon {
    width: 28px;
    height: 28px;
    stroke: none;
}

.price {
    display: flex;
    margin-top: 28px;
}

.price-title {
    width: 122px;
    line-height: 26px;
    white-space: nowrap;
    color: #999;
}

.price-box {
    width: 1024px;
    padding: 35px 10px 40px 0;
    background: #f5f6fa;
}

.field {
    display: flex;
    align-items: center;
}

.field label {
    width: 171px;
    padding-right: 20px;
    text-align: right;
}

.required {
    margin-right: 5px;
    color: #f56c6c;
}

.input-group {
    display: flex;
    width: 280px;
    height: 56px;
    border: 2px solid #dcdfe6;
    border-radius: 3px;
}

.input-group input {
    width: 183px;
    padding: 0 17px;
    border: 0;
    border-right: 2px solid #dcdfe6;
    background: #fff;
}

.unit {
    flex: 1;
    line-height: 52px;
    text-align: center;
}

.help {
    margin-bottom: 41px;
    padding-left: 181px;
    line-height: 56px;
    color: #b1b3b8;
}

.bottom-shade {
    position: absolute;
    left: 28px;
    right: 0;
    bottom: 0;
    height: 40px;
    background: linear-gradient(transparent, rgba(0, 0, 0, 0.08));
}
```
